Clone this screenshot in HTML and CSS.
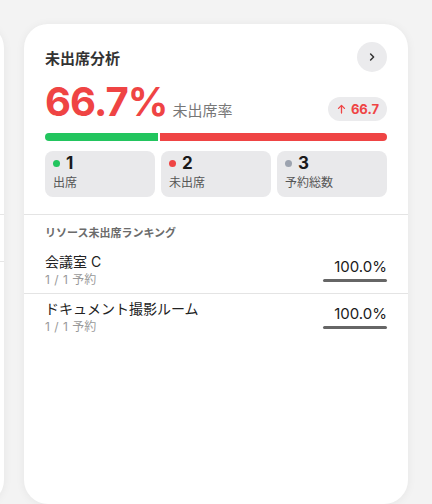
FILE: index.html
```html
<!DOCTYPE html>
<html lang="ja">
<head>
<meta charset="utf-8">
<link rel="stylesheet" href="styles.css">
</head>
<body>
<div class="track">
  <section class="card card-prev">
    <div class="prev-lines">
      <div class="prev-line l1"></div>
      <div class="prev-line l2"></div>
    </div>
  </section>

  <section class="card">
    <div class="top">
      <div class="header">
        <h2 class="title">未出席分析</h2>
        <button class="more" aria-label="詳細">
          <svg width="10" height="10" viewBox="0 0 10 10"><path d="M3.6 2 L6.6 5 L3.6 8" fill="none" stroke="#333" stroke-width="1.5" stroke-linecap="round" stroke-linejoin="round"/></svg>
        </button>
      </div>

      <div class="metric">
        <div class="metric-main">
          <span class="rate">66.7%</span>
          <span class="rate-label">未出席率</span>
        </div>
        <div class="badge">
          <svg width="9" height="10" viewBox="0 0 9 10"><path d="M4.5 9 V1.5 M1.5 4.4 L4.5 1.4 L7.5 4.4" fill="none" stroke="#ef4444" stroke-width="1.3" stroke-linecap="round" stroke-linejoin="round"/></svg>
          <span>66.7</span>
        </div>
      </div>

      <div class="bar">
        <div class="seg seg-green" style="flex-grow:1"></div>
        <div class="seg seg-red" style="flex-grow:2"></div>
      </div>

      <div class="stats">
        <div class="stat">
          <div class="stat-num"><i class="dot dot-green"></i>1</div>
          <div class="stat-label">出席</div>
        </div>
        <div class="stat">
          <div class="stat-num"><i class="dot dot-red"></i>2</div>
          <div class="stat-label">未出席</div>
        </div>
        <div class="stat">
          <div class="stat-num"><i class="dot dot-gray"></i>3</div>
          <div class="stat-label">予約総数</div>
        </div>
      </div>
    </div>

    <div class="ranking">
      <h3 class="rank-title">リソース未出席ランキング</h3>
      <div class="row">
        <div class="row-info">
          <div class="row-name">会議室 C</div>
          <div class="row-sub">1 / 1 予約</div>
        </div>
        <div class="row-val">
          <div class="pct">100.0%</div>
          <div class="pct-bar"></div>
        </div>
      </div>
      <div class="row">
        <div class="row-info">
          <div class="row-name">ドキュメント撮影ルーム</div>
          <div class="row-sub">1 / 1 予約</div>
        </div>
        <div class="row-val">
          <div class="pct">100.0%</div>
          <div class="pct-bar"></div>
        </div>
      </div>
    </div>
  </section>
</div>
</body>
</html>
```

FILE: styles.css
```css
* { box-sizing: border-box; }

html, body {
  margin: 0;
  padding: 0;
  height: 100%;
  overflow: hidden;
  background: #f3f3f3;
  font-family: "Inter", "Noto Sans CJK JP", sans-serif;
  color: #222;
}

.track {
  display: flex;
  gap: 20px;
  padding-top: 24px;
  margin-left: -380px;
}

.card {
  flex: 0 0 384px;
  height: 480px;
  background: #fff;
  border-radius: 24px;
  box-shadow: 0 1px 10px rgba(0, 0, 0, 0.06);
  overflow: hidden;
}

.prev-lines {
  padding-top: 190px;
  display: flex;
  flex-direction: column;
}
.prev-line {
  height: 1px;
  background: #e6e6e6;
  margin-left: 300px;
}
.prev-line.l2 { margin-top: 46px; }

.top {
  padding: 18px 21px 17px;
  border-bottom: 1px solid #e4e4e4;
}

.header {
  display: flex;
  align-items: center;
  justify-content: space-between;
  height: 30px;
}

.title {
  margin: 0;
  font-size: 15px;
  font-weight: 700;
  color: #333;
  font-family: "Noto Sans CJK JP", sans-serif;
}

.more {
  width: 30px;
  height: 30px;
  border: 0;
  padding: 0;
  border-radius: 50%;
  background: #ebebed;
  display: flex;
  align-items: center;
  justify-content: center;
}

.metric {
  display: flex;
  justify-content: space-between;
  align-items: flex-end;
  margin-top: 10px;
}

.metric-main {
  display: flex;
  align-items: baseline;
  gap: 5px;
}

.rate {
  font-size: 40px;
  line-height: 40px;
  font-weight: 700;
  color: #ef4444;
  letter-spacing: -0.9px;
}

.rate-label {
  font-size: 15px;
  color: #777;
  font-family: "Noto Sans CJK JP", sans-serif;
}

.badge {
  display: flex;
  align-items: center;
  gap: 5px;
  height: 24px;
  padding: 0 8px 0 9px;
  margin-bottom: 1px;
  border-radius: 12px;
  background: #ebebed;
  color: #ef4444;
  font-size: 13px;
  font-weight: 700;
}

.bar {
  display: flex;
  gap: 2px;
  height: 8px;
  margin-top: 11px;
}
.seg { height: 8px; flex-basis: 0; }
.seg-green { background: #22c55e; border-radius: 4px 0 0 4px; }
.seg-red { background: #ef4444; border-radius: 0 4px 4px 0; }

.stats {
  display: grid;
  grid-template-columns: repeat(3, 1fr);
  gap: 6px;
  margin-top: 10px;
}

.stat {
  background: #e9e9eb;
  border-radius: 8px;
  padding: 3px 8px 7px;
  height: 46px;
}

.stat-num {
  display: flex;
  align-items: center;
  gap: 6px;
  font-size: 17px;
  line-height: 18px;
  font-weight: 700;
  color: #1a1a1a;
}

.dot {
  width: 7px;
  height: 7px;
  border-radius: 50%;
  display: inline-block;
}
.dot-green { background: #22c55e; }
.dot-red { background: #ef4444; }
.dot-gray { background: #9ca3af; }

.stat-label {
  margin-top: 2px;
  font-size: 12px;
  line-height: 16px;
  color: #555;
  font-family: "Noto Sans CJK JP", sans-serif;
}

.rank-title {
  margin: 0;
  padding: 9px 21px 7px;
  font-size: 11px;
  line-height: 16px;
  font-weight: 700;
  color: #6b6b6b;
  font-family: "Noto Sans CJK JP", sans-serif;
}

.row {
  display: flex;
  justify-content: space-between;
  align-items: center;
  padding: 5px 21px;
}
.row + .row { border-top: 1px solid #e4e4e4; }

.row-name {
  font-size: 14px;
  line-height: 20px;
  color: #222;
}

.row-sub {
  font-size: 12px;
  line-height: 16px;
  color: #999;
  word-spacing: 1px;
}

.row-val {
  display: flex;
  flex-direction: column;
  align-items: flex-end;
  gap: 3px;
}

.pct {
  font-size: 15px;
  line-height: 18px;
  color: #1a1a1a;
}

.pct-bar {
  width: 64px;
  height: 3px;
  border-radius: 2px;
  background: #666;
}
```
